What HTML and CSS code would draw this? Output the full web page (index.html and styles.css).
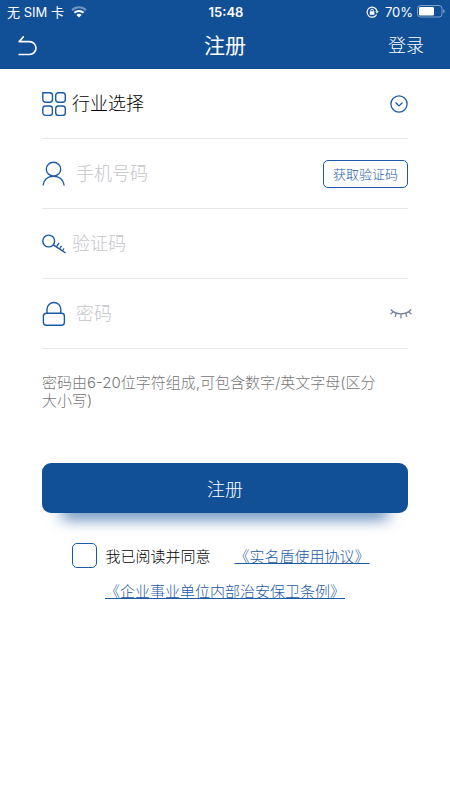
FILE: index.html
```html
<!DOCTYPE html>
<html lang="zh-CN">
<head>
<meta charset="utf-8">
<meta name="viewport" content="width=device-width, initial-scale=1">
<title>注册</title>
<link rel="stylesheet" href="styles.css">
</head>
<body>
<header class="top">
  <div class="status">
    <div class="status-side">
      <span>无 SIM 卡</span>
      <svg class="wifi" width="16" height="12" viewBox="0 0 16 12" fill="none" stroke="#fff" stroke-width="2">
        <path d="M1 4.2a10 10 0 0 1 14 0" opacity=".4"/>
        <path d="M3.4 6.8a6.6 6.6 0 0 1 9.2 0"/>
        <path d="M8 11.4L5.4 9a3.6 3.6 0 0 1 5.2 0z" fill="#fff" stroke="none"/>
      </svg>
    </div>
    <time class="clock">15:48</time>
    <div class="status-side status-end">
      <svg class="rotation" width="13" height="12" viewBox="0 0 13 12" fill="none" stroke="#fff">
        <path d="M10.6 8.4A5 5 0 1 1 11 5.2" stroke-width="1.2"/>
        <path d="M9.2 5.2h3.6L11 7.6z" fill="#fff" stroke="none"/>
        <rect x="3.8" y="5.2" width="4.6" height="3.6" rx=".5" fill="#fff" stroke="none"/>
        <path d="M4.8 5.4v-.9a1.3 1.3 0 0 1 2.6 0v.9"/>
      </svg>
      <span>70%</span>
      <svg width="28" height="13" viewBox="0 0 28 13">
        <rect x=".5" y=".5" width="24.500" height="11.500" rx="3" fill="none" stroke="#fff" stroke-opacity=".45"/>
        <rect x="2" y="2" width="15" height="8.500" rx="1.200" fill="#fff"/>
        <path d="M26.200 4.200q1.500.4 1.500 2t-1.500 2z" fill="#fff" opacity=".45"/>
      </svg>
    </div>
  </div>
  <nav class="nav">
    <a class="back" href="#" aria-label="返回">
      <svg width="20" height="20" viewBox="0 0 20 20" fill="none" stroke="#fff" stroke-width="1.700" stroke-linecap="round" stroke-linejoin="round">
        <path d="M5.200 1L1.200 5.600H11.500a6.300 6.300 0 0 1 0 12.900H1.200"/>
      </svg>
    </a>
    <h1 class="title">注册</h1>
    <a class="login" href="#">登录</a>
  </nav>
</header>

<form class="form">
  <div class="row">
    <label class="icon" for="industry" aria-label="行业选择">
      <svg width="24" height="26" viewBox="0 0 24 26" fill="none" stroke="#1c5aa6" stroke-width="1.400">
        <path d="M.8 1.800h7a2.700 2.700 0 0 1 2.700 2.700v4a2.700 2.700 0 0 1-2.700 2.700H3.500A2.700 2.700 0 0 1 .8 8.500z"/>
        <rect x="13.700" y="1.800" width="9.600" height="9.400" rx="2.700"/>
        <rect x=".8" y="15" width="9.600" height="9.400" rx="2.700"/>
        <rect x="13.700" y="15" width="9.600" height="9.400" rx="2.700"/>
      </svg>
    </label>
    <select class="field select" id="industry"><option>行业选择</option></select>
    <svg class="chevron" width="18" height="18" viewBox="0 0 18 18" fill="none" stroke="#1c5aa6" stroke-width="1.300">
      <circle cx="9" cy="9" r="8.100"/>
      <path d="M5.500 7.500L9 10.900l3.500-3.400"/>
    </svg>
  </div>
  <div class="row">
    <label class="icon icon-wide" for="phone" aria-label="手机号码">
      <svg width="24" height="26" viewBox="0 0 24 26" fill="none" stroke="#1c5aa6" stroke-width="1.400">
        <ellipse cx="11.500" cy="8.200" rx="7.200" ry="6.900"/>
        <path d="M1 24.500c.5-5.500 4.500-9.300 10.500-9.300S21.700 19 22.200 24.500"/>
      </svg>
    </label>
    <input class="field" id="phone" type="tel" placeholder="手机号码">
    <button class="code" type="button">获取验证码</button>
  </div>
  <div class="row">
    <label class="icon" for="code" aria-label="验证码">
      <svg width="24" height="26" viewBox="0 0 24 26" fill="none" stroke="#1c5aa6" stroke-width="1.400">
        <circle cx="6.700" cy="10" r="5.900"/>
        <path d="M11.300 13.800L23.600 22M14.400 15.800l2.700-4M17.500 18l2-3.200M20.500 19.900l1.500-2.400"/>
      </svg>
    </label>
    <input class="field" id="code" type="text" placeholder="验证码">
  </div>
  <div class="row">
    <label class="icon icon-wide" for="password" aria-label="密码">
      <svg width="24" height="26" viewBox="0 0 24 26" fill="none" stroke="#1c5aa6" stroke-width="1.400">
        <rect x="1.400" y="12.300" width="21" height="12" rx="3"/>
        <path d="M5 12.300V8.200a6.900 6.700 0 0 1 13.800 0v4.100"/>
      </svg>
    </label>
    <input class="field" id="password" type="password" placeholder="密码">
    <button class="eye" type="button" aria-label="显示密码">
      <svg width="22" height="12" viewBox="0 0 22 12" fill="none" stroke="#76859c" stroke-width="1.300">
        <path d="M.8 1.500Q4.500 5.800 11 5.800t10.200-4.300M.5 6.200l2.800-2.400M21.500 6.200l-2.800-2.400M6.200 5l-1 3.900M11 5.800v4.600M15.800 5l1 3.900"/>
      </svg>
    </button>
  </div>

  <p class="hint">密码由6-20位字符组成,可包含数字/英文字母(区分大小写)</p>

  <button class="submit" type="submit">注册</button>

  <div class="terms">
    <label class="agree"><input class="box" type="checkbox">我已阅读并同意</label>
    <a class="link" href="#">《实名盾使用协议》</a>
  </div>
  <div class="terms terms-more">
    <a class="link" href="#">《企业事业单位内部治安保卫条例》</a>
  </div>
</form>
</body>
</html>
```
FILE: styles.css
```css
* {
  box-sizing: border-box;
}

body {
  margin: 0;
  background: #fff;
  color: #000;
  font-family: Inter, "Noto Sans CJK SC", sans-serif;
  font-weight: 300;
}

button,
input,
select {
  margin: 0;
  padding: 0;
  border: 0;
  background: none;
  color: inherit;
  font: inherit;
}

svg {
  display: block;
}

.top {
  background: #114f97;
  color: #fff;
}

.status {
  display: flex;
  align-items: center;
  height: 23px;
  padding: 0 5px 0 7px;
  font-size: 13px;
  font-weight: 400;
}

.status-side {
  display: flex;
  flex: 1;
  align-items: center;
  gap: 7px;
}

.status-end {
  justify-content: flex-end;
  gap: 4px;
}

.rotation {
  margin-right: 2px;
}

.clock {
  font-weight: 600;
}

.nav {
  display: grid;
  grid-template-columns: 1fr auto 1fr;
  align-items: center;
  height: 46px;
  padding: 0 18px;
}

.title {
  margin: 0;
  font-size: 21px;
  font-weight: 400;
  line-height: 24px;
}

.login {
  justify-self: end;
  margin-right: 8px;
  color: inherit;
  font-size: 18px;
  line-height: 24px;
  text-decoration: none;
}

.form {
  padding: 0 42px;
}

.row {
  display: flex;
  align-items: center;
  position: relative;
  height: 70px;
  border-bottom: 1px solid #e6e6e6;
}

.icon {
  flex: none;
  width: 30px;
}

.icon-wide {
  width: 34px;
}

.field {
  flex: 1;
  min-width: 0;
  height: 40px;
  font-size: 18px;
  outline: 0;
}

.field::placeholder {
  color: #c5c5c9;
  opacity: 1;
}

.select {
  appearance: none;
}

.chevron {
  position: absolute;
  right: 0;
  pointer-events: none;
}

.code {
  height: 28px;
  padding: 0 9px;
  border: 1px solid #1c5aa6;
  border-radius: 5px;
  color: #1c5aa6;
  font-size: 13px;
}

.eye {
  margin-right: -4px;
}

.hint {
  margin: 25px 0 0;
  padding-right: 20px;
  color: #777;
  font-size: 15px;
  line-height: 18px;
}

.submit {
  display: block;
  width: 100%;
  height: 50px;
  margin-top: 53px;
  border-radius: 9px;
  background: #114f97;
  box-shadow: 0 24px 16px -20px #114f97;
  color: #fff;
  font-size: 18px;
}

.terms {
  display: flex;
  align-items: center;
  justify-content: center;
  gap: 24px;
  margin-top: 30px;
  padding-right: 8px;
  font-size: 15px;
}

.terms-more {
  margin-top: 12px;
  padding-right: 0;
}

.agree {
  display: flex;
  align-items: center;
  gap: 8px;
}

.box {
  appearance: none;
  width: 25px;
  height: 25px;
  border: 1px solid #1c5aa6;
  border-radius: 5px;
}

.box:checked {
  background: #1c5aa6;
}

.link {
  color: #1c5aa6;
}
```
